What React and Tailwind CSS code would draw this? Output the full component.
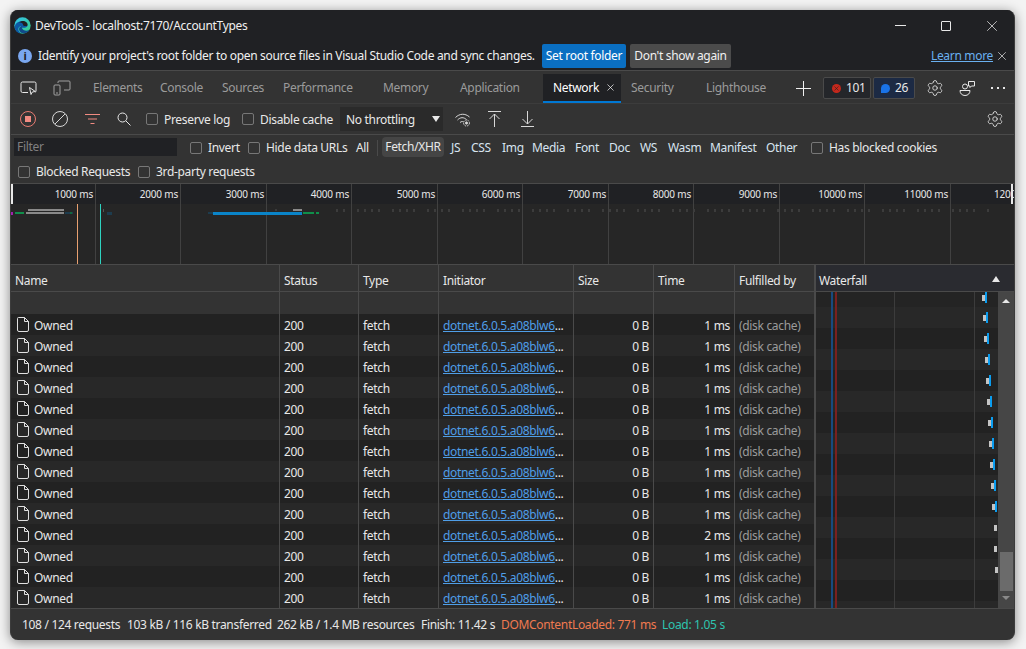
import { Settings, X } from "lucide-react";

const TABS = [
  { label: "Elements", cls: "w-[67px]" },
  { label: "Console", cls: "w-[62px]" },
  { label: "Sources", cls: "w-[61px]" },
  { label: "Performance", cls: "w-[100px]" },
  { label: "Memory", cls: "w-[77px]" },
  { label: "Application", cls: "w-[83px]" },
];

const FILTERS = [
  { label: "JS", cls: "w-[20px]" },
  { label: "CSS", cls: "w-[31px]" },
  { label: "Img", cls: "w-[30px]" },
  { label: "Media", cls: "w-[43px]" },
  { label: "Font", cls: "w-[34px]" },
  { label: "Doc", cls: "w-[31px]" },
  { label: "WS", cls: "w-[28px]" },
  { label: "Wasm", cls: "w-[42px]" },
  { label: "Manifest", cls: "w-[56px]" },
  { label: "Other", cls: "w-[45px]" },
];

const RULER = [1000, 2000, 3000, 4000, 5000, 6000, 7000, 8000, 9000, 10000, 11000];

const TIMES = [1, 1, 1, 1, 1, 1, 1, 1, 1, 1, 2, 1, 1, 1];

// waterfall marks: y centre, grey x, blue x (page coordinates)
const MARKS = [
  [298, 982, 985],
  [318, 983, 986],
  [339, 984, 987],
  [360, 985, 988],
  [381, 986, 989],
  [402, 987, 990],
  [423, 988, 991],
  [444, 989, 992],
  [465, 990, 993],
  [486, 991, 994],
  [507, 992, 995],
  [528, 994, null],
  [549, 994, null],
  [570, 995, null],
];

const DOTS = [];
for (let x = 336; x < 990; x += 7) {
  if (x % 5 !== 0) DOTS.push(x);
}

const GRID = "grid grid-cols-[269px_79px_80px_135px_80px_81px_80px]";
const CELL = "pt-[1px] px-[4px] border-r border-[#4a4a4a]";

function Check({ className = "" }) {
  return <span className={`block w-[12px] h-[12px] rounded-[2px] border border-[#777777] shrink-0 ${className}`} />;
}

function EdgeLogo() {
  return (
    <svg width="17" height="17" viewBox="0 0 24 24">
      <defs>
        <linearGradient id="edgeA" x1="0" y1="0" x2="1" y2="1">
          <stop offset="0" stopColor="#35c1f1" />
          <stop offset="1" stopColor="#36d07f" />
        </linearGradient>
      </defs>
      <circle cx="12" cy="12" r="11.5" fill="url(#edgeA)" />
      <path d="M1 14c1-6 6-8 10-8 5 0 8 3 8 6 0 2-2 3-4 3h-4c-1 0-1-1-1-2-3 0-5 3-3 7 1 2 3 3 3 3C5 23 1 19 1 14z" fill="#0c59a4" />
      <path d="M11 13c-3 0-5 3-3 7 1 2 4 3.500 7 3 3-.5 6-2.500 7-5-3 2-8 2-10-1-1-1.500-1-3-1-4z" fill="#114a8b" />
      <path d="M13 12c2 1 5 1 6 0 1-2-1-5-4-6-3-1-6 0-8 2 3-1 6 1 6 4z" fill="#202124" />
    </svg>
  );
}

function Inspect() {
  return (
    <svg width="18" height="14" viewBox="0 0 18 14" fill="none" stroke="#e8e8e8" strokeWidth="1">
      <path d="M8 11.500H2.500a1.500 1.500 0 0 1-1.500-1.500V2.500A1.500 1.500 0 0 1 2.500 1h12A1.500 1.500 0 0 1 16 2.500V10c0 .5-.3 1-.8 1.300" />
      <path d="M9.500 6.500l1.500 7 1.300-2.500 3-.5z" fill="#333333" />
    </svg>
  );
}

function Device() {
  return (
    <svg width="18" height="16" viewBox="0 0 18 16" fill="none" stroke="#a0a0a0" strokeWidth="1">
      <path d="M5 3V2a1 1 0 0 1 1-1h10a1 1 0 0 1 1 1v7a1 1 0 0 1-1 1h-5" />
      <rect x="1" y="5" width="6" height="10" rx="1" />
      <path d="M3 13h2" />
    </svg>
  );
}

function Feedback() {
  return (
    <svg width="17" height="17" viewBox="0 0 17 17" fill="none" stroke="#e8e8e8" strokeWidth="1">
      <circle cx="6" cy="6.500" r="2.500" />
      <path d="M1 10.500h10c0 3-2 5-5 5s-5-2-5-5z" />
      <path d="M9.500 1.500h6v4.500h-3l-1.500 1.500v-1.500h-1.500z" />
    </svg>
  );
}

function Record() {
  return (
    <svg width="16" height="16" viewBox="0 0 16 16">
      <circle cx="8" cy="8" r="7.500" fill="none" stroke="#e77b72" />
      <rect x="5" y="5" width="6" height="6" fill="#f28b82" />
    </svg>
  );
}

function Clear() {
  return (
    <svg width="16" height="16" viewBox="0 0 16 16" fill="none" stroke="#d8d8d8">
      <circle cx="8" cy="8" r="7.500" />
      <path d="M3 13L13 3" />
    </svg>
  );
}

function FilterIcon() {
  return (
    <svg width="15" height="10" viewBox="0 0 15 10" stroke="#f28b82">
      <path d="M0 .5h15M3 5h9M5.500 9.500h4" />
    </svg>
  );
}

function Search() {
  return (
    <svg width="14" height="14" viewBox="0 0 14 14" fill="none" stroke="#e8e8e8">
      <circle cx="5.500" cy="5.500" r="4.500" />
      <path d="M9 9l4.500 4.500" />
    </svg>
  );
}

function WifiGear() {
  return (
    <svg width="16" height="15" viewBox="0 0 16 15" fill="none" stroke="#d8d8d8">
      <path d="M.5 5.500C4.500 1.500 10 1 14.500 5" />
      <path d="M2.500 8c3-3 6-3 9-.5" />
      <path d="M5 10.500c1.500-1.200 2.500-1.200 3.500-.5" />
      <circle cx="11.500" cy="11" r="2" fill="#d8d8d8" stroke="#333333" />
      <circle cx="11.500" cy="11" r="3" strokeDasharray="1.500 1" />
    </svg>
  );
}

function Arrow({ up }) {
  return (
    <svg width="13" height="16" viewBox="0 0 13 16" fill="none" stroke="#d8d8d8">
      {up ? <path d="M0 .5h13M6.500 16V3M1.500 8l5-5 5 5" /> : <path d="M0 15.500h13M6.500 0v13M1.500 8l5 5 5-5" />}
    </svg>
  );
}

function FileIcon() {
  return (
    <svg width="12" height="15" viewBox="0 0 12 15" fill="none" stroke="#e0e0e0" className="shrink-0">
      <path d="M1.500.5h6l4 4V13a1.500 1.500 0 0 1-1.500 1.500H2A1.500 1.500 0 0 1 .5 13V1.500a1 1 0 0 1 1-1z" />
      <path d="M7.500.5v4h4" />
    </svg>
  );
}

function Overview() {
  return (
    <div className="relative flex h-[81px] border-t border-[#4a4a4a] bg-[#262626] shrink-0">
      {RULER.map((ms, i) => (
        <div key={ms} className={`border-r border-[#414141] shrink-0 ${i === 0 ? "w-[85px]" : i % 2 === 1 ? "w-[85px]" : "w-[86px]"}`}>
          <div className="h-[20px] bg-[#202124] text-right pr-[2px] text-[10px] tracking-[-0.2px] leading-[21px] text-[#e8e8e8]">{ms} ms</div>
        </div>
      ))}
      <div className="flex-1 overflow-hidden">
        <div className="h-[20px] bg-[#202124] pl-[43px] text-[10px] tracking-[-0.2px] leading-[21px] text-[#e8e8e8] whitespace-nowrap">12000 ms</div>
      </div>
      <span className="absolute left-0 top-0 w-[2px] h-[20px] bg-[#e8e8e8]" />
      <span className="absolute right-[1px] top-0 w-[2px] h-[20px] bg-[#e8e8e8]" />
      <svg className="absolute left-0 top-0" width="1004" height="81" viewBox="0 0 1004 81">
        <g transform="translate(-11 -184)">
          <rect x="11" y="212" width="2" height="3" fill="#a020b0" />
          <rect x="15" y="212" width="9" height="2" fill="#0f8f4a" />
          <rect x="28" y="209" width="36" height="2" fill="#8a8a8a" />
          <rect x="26" y="212" width="38" height="2" fill="#8a8a8a" />
          <rect x="65" y="212" width="8" height="2" fill="#1d3c4e" />
          <rect x="70" y="212" width="2" height="2" fill="#0f6a3f" />
          <rect x="103" y="209" width="1" height="3" fill="#555555" />
          <rect x="107" y="212" width="5" height="3" fill="#1d3c4e" />
          <rect x="208" y="212" width="5" height="2" fill="#1d3c4e" />
          <rect x="213" y="212" width="89" height="3" fill="#0a84c8" />
          <rect x="293" y="209" width="9" height="2" fill="#8a8a8a" />
          <rect x="303" y="212" width="11" height="2" fill="#0f8f4a" />
          <rect x="316" y="212" width="3" height="2" fill="#0f8f4a" />
          <rect x="275" y="209" width="2" height="2" fill="#3a3a3a" />
          {DOTS.map((x) => (
            <rect key={x} x={x} y="209" width="2" height="3" fill="#3c3c3c" />
          ))}
          <rect x="77" y="204" width="1" height="60" fill="#e8a070" />
          <rect x="100" y="204" width="1" height="60" fill="#2ed3c0" />
        </g>
      </svg>
    </div>
  );
}

function Waterfall() {
  return (
    <div className="flex flex-col w-[199px] border-l border-[#4a4a4a]">
      <div className="h-[27px] bg-[#2a2b30] border-b border-[#4a4a4a] flex items-center justify-between pl-[3px] pr-[14px] text-[12px]">
        <span className="pt-[6px]">Waterfall</span>
        <span className="mt-[2px] w-0 h-0 border-x-[4px] border-x-transparent border-b-[6px] border-b-[#e8e8e8]" />
      </div>
      <div className="flex flex-1 min-h-0">
        <div className="relative flex-1 overflow-hidden">
          <div className="h-[15px] bg-[#242424]" />
          {TIMES.concat([1]).map((_, i) => (
            <div key={i} className={`h-[21px] ${i % 2 === 0 ? "bg-[#282828]" : "bg-[#222222]"}`} />
          ))}
          <span className="absolute left-[15px] top-0 bottom-0 w-[2px] bg-[#184a80]" />
          <span className="absolute left-[19px] top-0 bottom-0 w-[2px] bg-[#7a2020]" />
          <span className="absolute left-[78px] top-0 bottom-0 w-[1px] bg-[#3c3c3c]" />
          <span className="absolute left-[158px] top-0 bottom-0 w-[1px] bg-[#3c3c3c]" />
          {MARKS.map(([y, grey, blue]) => (
            <div key={y}>
              <span className="absolute w-[3px] h-[6px] bg-[#c4c4c4]" style={{ left: grey - 816, top: y - 295 }} />
              {blue && <span className="absolute w-[2px] h-[11px] bg-[#0a9df0]" style={{ left: blue - 816, top: y - 298 }} />}
            </div>
          ))}
        </div>
        <div className="w-[16px] bg-[#464646] flex flex-col items-center justify-between">
          <span className="mt-[7px] w-0 h-0 border-x-[4px] border-x-transparent border-b-[4px] border-b-[#e8e8e8]" />
          <div className="flex flex-col items-center w-full">
            <div className="w-[13px] h-[39px] bg-[#6b6b6b]" />
            <span className="mt-[5px] mb-[8px] w-0 h-0 border-x-[4px] border-x-transparent border-t-[4px] border-t-[#8a8a8a]" />
          </div>
        </div>
      </div>
    </div>
  );
}

export default function App() {
  return (
    <div className="w-[1026px] h-[649px] bg-[#f3f3f3] pt-[10px] pl-[10px] overflow-hidden font-['Noto_Sans','Liberation_Sans',sans-serif] tracking-[-0.32px]">
      <div className="w-[1005px] h-[630px] rounded-[8px] overflow-hidden bg-[#333333] text-[#e8e8e8] flex flex-col border-l border-r border-[#3c3c3c] shadow-[0_2px_12px_rgba(0,0,0,0.45)] text-[12px]">
        {/* title bar */}
        <div className="h-[31px] bg-[#202124] flex items-center shrink-0">
          <span className="ml-[3px] mr-[4px] flex"><EdgeLogo /></span>
          <span className="text-[12px] text-[#f0f0f0]">DevTools - localhost:7170/AccountTypes</span>
          <div className="ml-auto flex items-center pr-[13px]">
            <span className="w-[11px] h-[1px] bg-[#e8e8e8]" />
            <span className="ml-[35px] w-[10px] h-[10px] rounded-[1px] border border-[#e8e8e8]" />
            <X size={18} strokeWidth={1} className="ml-[32px]" />
          </div>
        </div>
        {/* info bar */}
        <div className="h-[30px] bg-[#202124] flex items-center border-b border-[#4a4a4a] shrink-0">
          <span className="ml-[7px] w-[14px] h-[14px] rounded-full bg-[#7aa7f0] text-[#202124] text-[11px] leading-[14px] text-center font-bold">i</span>
          <span className="ml-[6px] w-[504px] whitespace-nowrap text-[#f0f0f0]">Identify your project's root folder to open source files in Visual Studio Code and sync changes.</span>
          <span className="h-[24px] w-[84px] rounded-[2px] bg-[#0a6fc2] text-center leading-[24px] text-white">Set root folder</span>
          <span className="ml-[4px] h-[24px] w-[101px] rounded-[2px] bg-[#4b4b4b] text-center leading-[24px] text-[#f0f0f0]">Don't show again</span>
          <span className="ml-auto text-[#6ab0f0] underline">Learn more</span>
          <X size={14} strokeWidth={1.2} className="ml-[2px] mr-[5px]" />
        </div>
        {/* tab strip */}
        <div className="h-[33px] pt-[2px] flex items-center border-b border-[#3c3c3c] shrink-0">
          <span className="ml-[9px] w-[33px] flex"><Inspect /></span>
          <span className="w-[40px] flex"><Device /></span>
          {TABS.map((t) => (
            <span key={t.label} className={`${t.cls} text-[#9b9b9b] shrink-0`}>{t.label}</span>
          ))}
          <div className="h-[29px] w-[78px] bg-[#202124] border-b-2 border-[#0078d4] flex items-center pl-[10px] text-white">
            <span className="pt-[2px]">Network</span>
            <X size={11} strokeWidth={1.5} className="ml-[6px]" />
          </div>
          <span className="ml-[10px] w-[75px] text-[#9b9b9b]">Security</span>
          <span className="w-[90px] text-[#9b9b9b]">Lighthouse</span>
          <svg width="15" height="15" viewBox="0 0 15 15" stroke="#f0f0f0"><path d="M7.500 0v15M0 7.500h15" /></svg>
          <div className="ml-[12px] h-[22px] w-[48px] rounded-[2px] bg-[#24262a] border border-[#4a4a4a] flex items-center pl-[8px] gap-[5px]">
            <span className="w-[9px] h-[9px] rounded-full bg-[#c5281c] flex items-center justify-center text-[#202124]"><X size={7} strokeWidth={2} /></span>
            <span>101</span>
          </div>
          <div className="ml-[2px] h-[22px] w-[42px] rounded-[2px] bg-[#1c2a44] border border-[#4a4a4a] flex items-center pl-[7px] gap-[5px]">
            <span className="w-[9px] h-[9px] rounded-full rounded-bl-none bg-[#1a73e8]" />
            <span>26</span>
          </div>
          <Settings size={18} strokeWidth={1.1} className="ml-[11px]" />
          <span className="ml-[15px] flex"><Feedback /></span>
          <span className="ml-[15px] flex gap-[4px]">
            <span className="w-[2px] h-[2px] bg-[#e8e8e8]" />
            <span className="w-[2px] h-[2px] bg-[#e8e8e8]" />
            <span className="w-[2px] h-[2px] bg-[#e8e8e8]" />
          </span>
        </div>
        {/* network toolbar */}
        <div className="h-[31px] flex items-center border-b border-[#4a4a4a] shrink-0">
          <span className="ml-[9px] flex"><Record /></span>
          <span className="ml-[16px] flex"><Clear /></span>
          <span className="ml-[17px] flex"><FilterIcon /></span>
          <span className="ml-[17px] flex"><Search /></span>
          <Check className="ml-[15px]" />
          <span className="ml-[6px] pt-[2px] w-[78px]">Preserve log</span>
          <Check />
          <span className="ml-[6px] pt-[2px] w-[80px]">Disable cache</span>
          <div className="h-[24px] w-[103px] bg-[#2a2a2a] flex items-center pl-[6px] pr-[3px] justify-between">
            <span className="pt-[2px]">No throttling</span>
            <span className="w-0 h-0 border-x-[4px] border-x-transparent border-t-[6px] border-t-[#e8e8e8]" />
          </div>
          <span className="ml-[12px] flex"><WifiGear /></span>
          <span className="ml-[17px] flex"><Arrow up /></span>
          <span className="ml-[20px] flex"><Arrow /></span>
          <Settings size={18} strokeWidth={1.1} className="ml-auto mr-[10px]" />
        </div>
        {/* filter bar */}
        <div className="h-[48px] shrink-0 flex flex-col">
          <div className="h-[26px] flex items-center">
            <div className="ml-[3px] mb-[2px] w-[163px] h-[18px] bg-[#202124] text-[#808080] pl-[3px] leading-[18px]">Filter</div>
            <Check className="ml-[13px]" />
            <span className="ml-[6px] w-[40px]">Invert</span>
            <Check />
            <span className="ml-[6px] w-[90px]">Hide data URLs</span>
            <span className="w-[21px]">All</span>
            <span className="w-[1px] h-[16px] bg-[#4a4a4a] mr-[4px]" />
            <span className="mb-[2px] h-[20px] w-[62px] rounded-[4px] bg-[#454545] text-center leading-[20px]">Fetch/XHR</span>
            <span className="w-[7px]" />
            {FILTERS.map((f) => (
              <span key={f.label} className={`${f.cls} shrink-0 text-[#d8e4f0]`}>{f.label}</span>
            ))}
            <Check />
            <span className="ml-[6px]">Has blocked cookies</span>
          </div>
          <div className="h-[21px] flex items-center pl-[7px]">
            <Check />
            <span className="ml-[6px] w-[102px]">Blocked Requests</span>
            <Check />
            <span className="ml-[6px]">3rd-party requests</span>
          </div>
        </div>
        <Overview />
        {/* request table */}
        <div className="flex h-[344px] border-t border-[#4a4a4a] shrink-0 overflow-hidden">
          <div className="w-[804px] shrink-0">
            <div className={`${GRID} grid-rows-[26px] h-[27px] border-b border-[#4a4a4a] leading-[24px] bg-[#333333]`}>
              {["Name", "Status", "Type", "Initiator", "Size", "Time", "Fulfilled by"].map((h) => (
                <span key={h} className="pt-[4px] px-[4px] border-r border-[#4a4a4a]">{h}</span>
              ))}
            </div>
            <div className={`${GRID} h-[22px]`}>
              {[0, 1, 2, 3, 4, 5, 6].map((c) => (
                <span key={c} className="border-r border-[#4a4a4a]" />
              ))}
            </div>
            {TIMES.map((ms, i) => (
              <div key={i} className={`${GRID} grid-rows-[21px] h-[21px] leading-[22px] ${i % 2 === 0 ? "bg-[#222222]" : "bg-[#282828]"}`}>
                <span className="flex items-center pl-[6px] gap-[5px] border-r border-[#4a4a4a]"><FileIcon /><span className="pt-[2px]">Owned</span></span>
                <span className={CELL}>200</span>
                <span className={CELL}>fetch</span>
                <span className={`${CELL} whitespace-nowrap overflow-hidden`}>
                  <span className="underline text-[#4f9ee8]">dotnet.6.0.5.a08blw6</span>...
                </span>
                <span className={`${CELL} text-right`}>0 B</span>
                <span className={`${CELL} text-right`}>{ms} ms</span>
                <span className={`${CELL} text-[#9b9b9b]`}>(disk cache)</span>
              </div>
            ))}
          </div>
          <Waterfall />
        </div>
        {/* status bar */}
        <div className="flex-1 flex items-center border-t border-[#4a4a4a] pl-[11px] whitespace-nowrap">
          <span className="w-[105px]">108 / 124 requests</span>
          <span className="w-[150px]">103 kB / 116 kB transferred</span>
          <span className="w-[144px]">262 kB / 1.4 MB resources</span>
          <span className="w-[80px]">Finish: 11.42 s</span>
          <span className="w-[161px] text-[#f07a50]">DOMContentLoaded: 771 ms</span>
          <span className="text-[#2ec4b0]">Load: 1.05 s</span>
        </div>
      </div>
    </div>
  );
}
